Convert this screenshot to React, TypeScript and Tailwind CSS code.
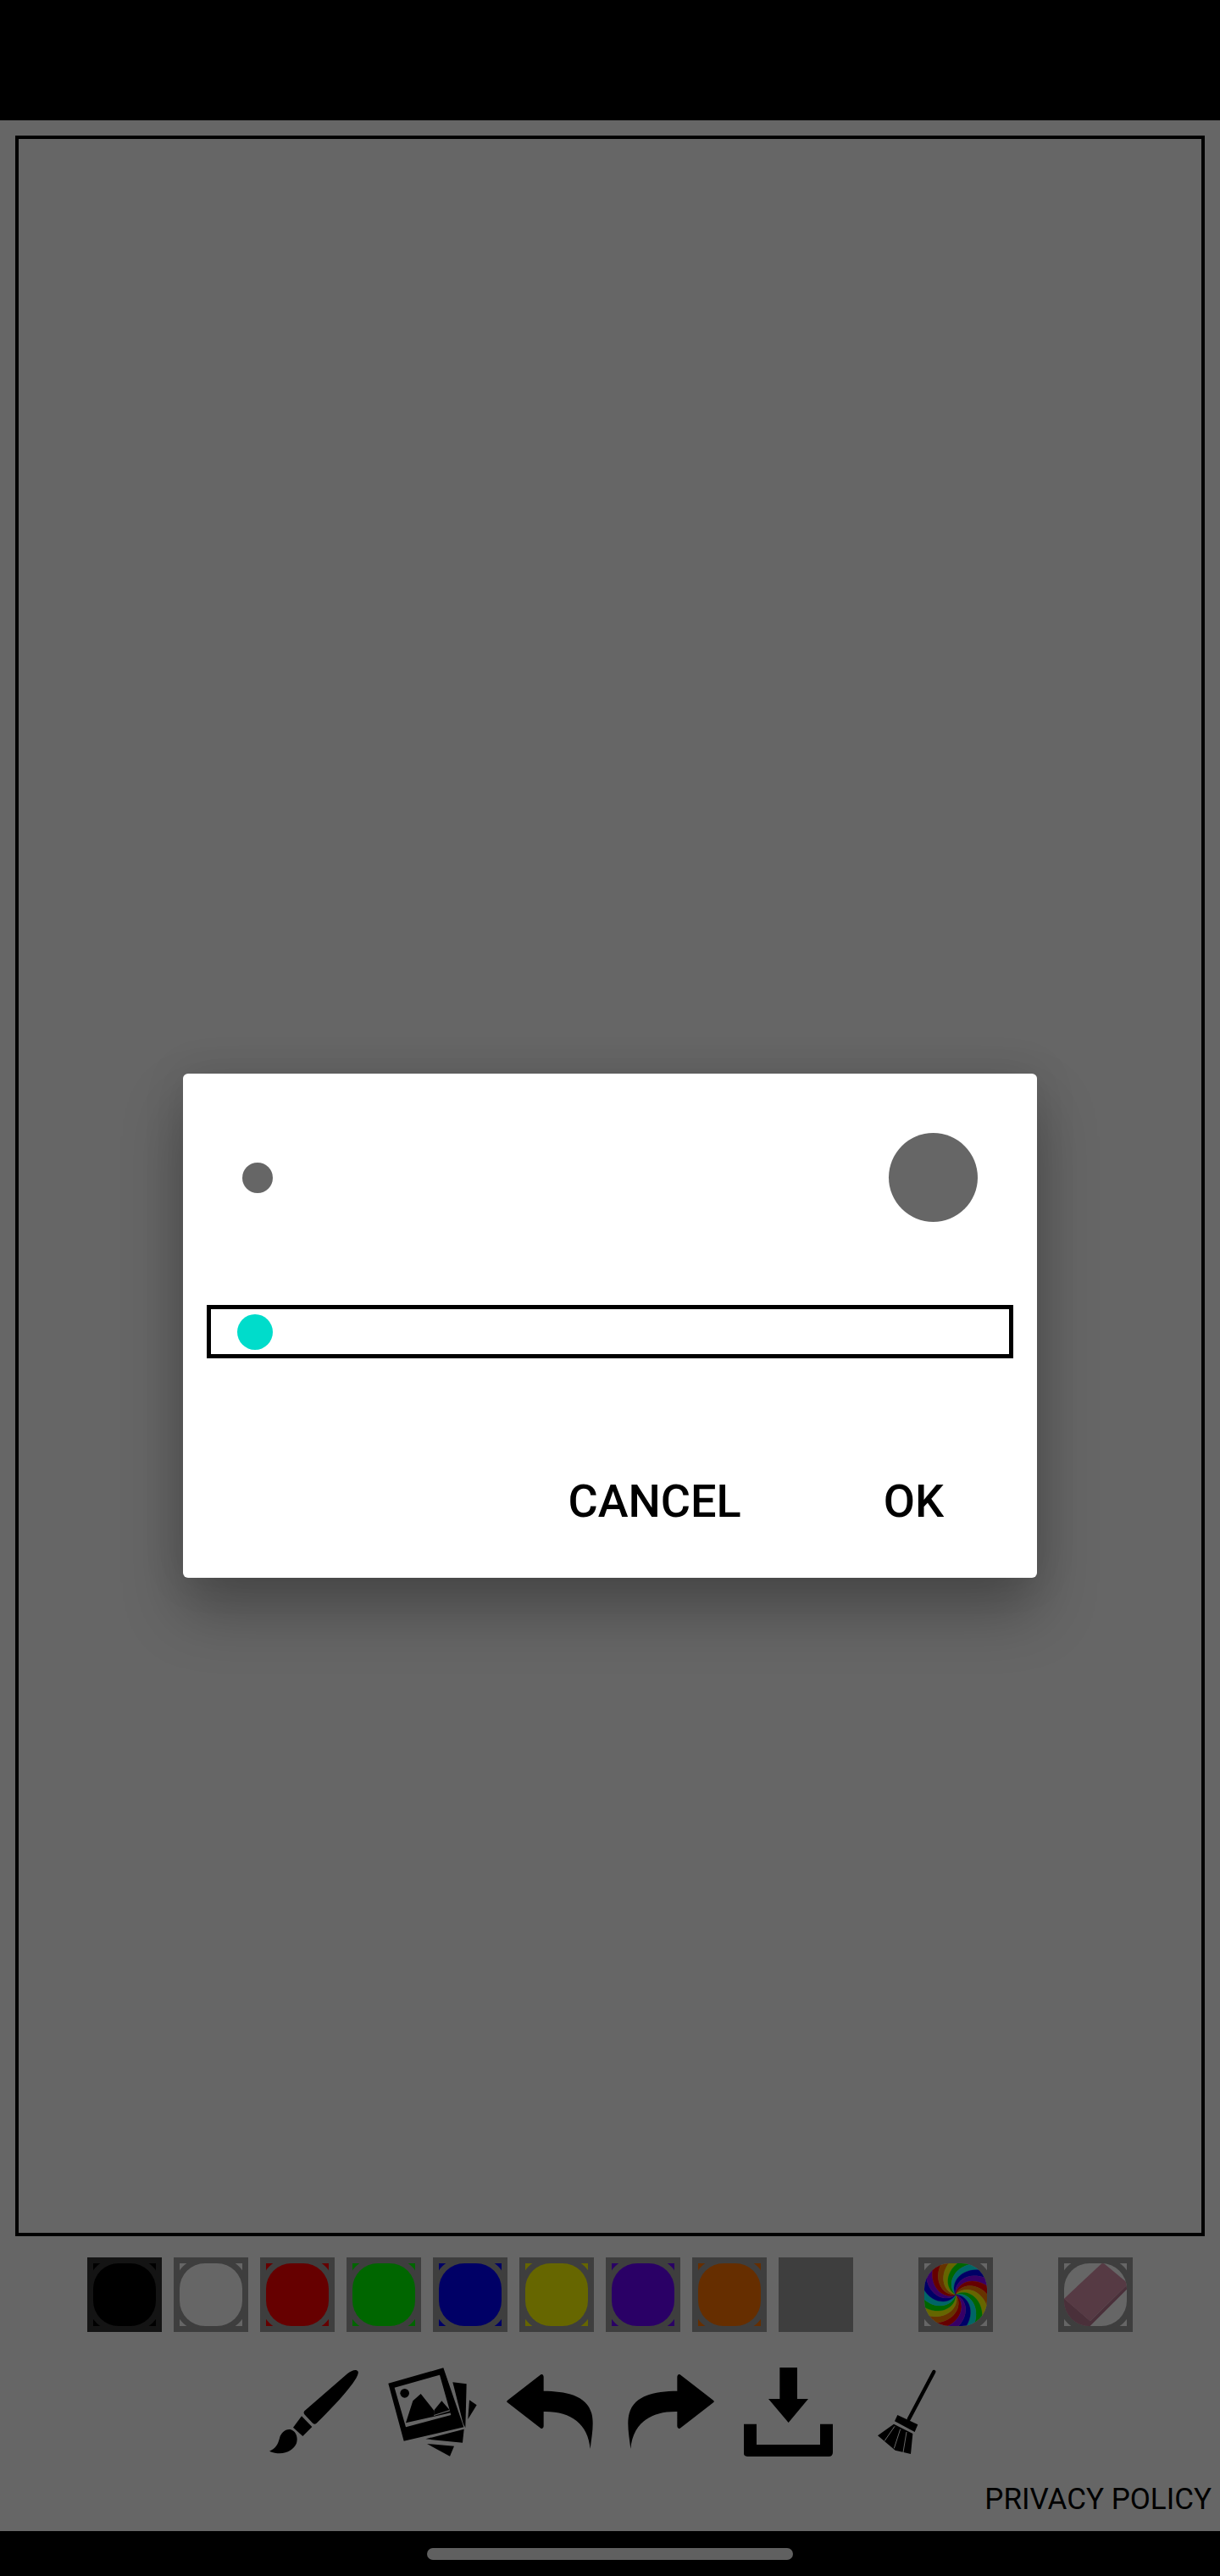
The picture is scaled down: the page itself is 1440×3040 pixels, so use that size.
import type { ReactNode } from 'react'

// paint colours, before the dialog scrim darkens them
const SWATCHES = ['#000000', '#ffffff', '#ff0000', '#00ff00', '#0000ff', '#ffff00', '#6a00ff', '#ff7300']
const RAINBOW = ['#ff0000', '#ff7f00', '#ffff00', '#00ff00', '#00ffff', '#0000ff', '#8b00ff']

function swirlPath(index: number, total: number) {
  const start = (index / total) * Math.PI * 2 + 0.62
  const end = ((index + 1) / total) * Math.PI * 2 + 0.62
  const pts: string[] = []
  const at = (a: number, t: number) => {
    const angle = a + 1.75 * t
    return `${(37 + 56 * t * Math.cos(angle)).toFixed(2)} ${(37 + 56 * t * Math.sin(angle)).toFixed(2)}`
  }
  for (let s = 0; s <= 20; s++) pts.push(at(start, s / 20))
  for (let s = 20; s >= 0; s--) pts.push(at(end, s / 20))
  return 'M' + pts.join('L') + 'Z'
}

function Swatch({ color, selected = false, children }: { color?: string; selected?: boolean; children?: ReactNode }) {
  return (
    <button className={`w-[88px] h-[88px] p-[7px] shrink-0 ${selected ? 'bg-[#323232]' : 'bg-[#9b9b9b]'}`}>
      <div className="w-[74px] h-[74px] overflow-hidden" style={{ background: color ?? '#ffffff' }}>
        <div
          className={`w-[74px] h-[74px] rounded-[30px] overflow-hidden ${
            selected ? 'shadow-[0_0_0_7px_#323232]' : 'shadow-[0_0_0_7px_#9b9b9b]'
          }`}
          style={{ background: color ?? '#ffffff' }}
        >
          {children}
        </div>
      </div>
    </button>
  )
}

function RainbowFill() {
  const bands = Array.from({ length: 21 }, (_, i) => i)
  return (
    <svg viewBox="0 0 74 74" className="block w-[74px] h-[74px]">
      {bands.map((i) => (
        <path key={i} d={swirlPath(i, 21)} fill={RAINBOW[i % 7]} stroke={RAINBOW[i % 7]} strokeWidth="0.3" />
      ))}
    </svg>
  )
}

function EraserFill() {
  return (
    <svg viewBox="588 63 222 222" className="block w-[74px] h-[74px]">
      <path d="M588 188L680 268L680 300L588 300Z" fill="#b97891" />
      <path d="M680 268L815 135L815 150L675 290L600 290L588 230L588 188Z" fill="#b97891" />
      <path d="M725 60L815 135L680 268L588 188Z" fill="#d791aa" />
    </svg>
  )
}

function BrushIcon() {
  return (
    <svg viewBox="54 72 315 315" className="w-[105px] h-[105px] shrink-0">
      <path d="M178 226L330 94C345 82 362 76 368 86C371 96 358 116 346 132C310 180 262 228 220 270C214 274 210 272 206 268L178 238C175 234 175 230 178 226Z" />
      <path d="M168 244L205 282L172 315L138 284Z" />
      <path d="M130 292C148 298 156 318 150 340C138 368 100 388 54 368C74 360 84 346 90 322C95 302 112 288 130 292Z" />
    </svg>
  )
}

function PhotosIcon() {
  return (
    <svg viewBox="474 72 315 315" className="w-[105px] h-[105px] shrink-0">
      <path
        fillRule="evenodd"
        d="M475 128L670 73L742 283L530 332ZM497 143L537 283L697 240L657 98Z"
      />
      <path d="M537 268L562 190L590 165L618 200L638 226L636 243L693 226L697 232Z" />
      <path d="M638 222L664 190L692 222L636 240Z" />
      <circle cx="533" cy="163" r="16" />
      <path d="M703 124L752 130L748 285L740 270Z" />
      <path d="M762 187L788 205L757 255Z" />
      <path d="M607 325L743 290L738 338Z" />
      <path d="M612 342L708 350L693 386Z" />
    </svg>
  )
}

function UndoIcon() {
  return (
    <svg viewBox="894 72 315 315" className="w-[105px] h-[105px] shrink-0">
      <path d="M1015 97Q1024 94 1025 104L1025 155C1100 156 1178 168 1195 235C1204 270 1196 310 1190 360C1182 270 1120 226 1025 228L1025 280Q1024 291 1015 287L897 196Q892 192 897 188Z" />
    </svg>
  )
}

function RedoIcon() {
  return (
    <svg viewBox="54 72 315 315" className="w-[105px] h-[105px] shrink-0">
      <path d="M248 97Q239 94 238 104L238 155C163 156 85 168 68 235C59 270 67 310 73 360C81 270 143 226 238 228L238 280Q239 291 248 287L366 196Q371 192 366 188Z" />
    </svg>
  )
}

function SaveIcon() {
  return (
    <svg viewBox="474 72 315 315" className="w-[105px] h-[105px] shrink-0">
      <path d="M601 72H663V183H702L632 267L561 183H601Z" />
      <path d="M473 272H519V345H744V272H789V372Q789 387 774 387H488Q473 387 473 372Z" />
    </svg>
  )
}

function BroomIcon() {
  return (
    <svg viewBox="-36 12 315 315" className="w-[105px] h-[105px] shrink-0">
      <path d="M217 27L128 195" stroke="#000" strokeWidth="13" strokeLinecap="round" fill="none" />
      <path d="M88 180L160 214L149 240L78 202Z" />
      <path d="M75 212L142 246L135 318L80 305L18 253Z" />
      <path d="M78 220L42 272M98 230L76 298M120 240L108 312" stroke="#fff" strokeWidth="3" fill="none" />
    </svg>
  )
}

export default function App() {
  return (
    <div className="relative w-[1440px] h-[3040px] bg-white flex flex-col overflow-hidden font-['Roboto',sans-serif]">
      <div className="h-[142px] bg-black shrink-0" />

      <main className="flex-1 flex flex-col">
        <div className="mt-[18px] mx-[18px] h-[2479px] border-4 border-black" />

        <div className="mt-[25px] flex justify-center">
          <div className="flex gap-[14px]">
            {SWATCHES.map((c, i) => (
              <Swatch key={c} color={c} selected={i === 0} />
            ))}
            <div className="w-[88px] h-[88px] bg-[#9b9b9b]" />
          </div>
          <div className="ml-[77px]">
            <Swatch>
              <RainbowFill />
            </Swatch>
          </div>
          <div className="ml-[77px]">
            <Swatch>
              <EraserFill />
            </Swatch>
          </div>
        </div>

        <div className="mt-[42px] flex justify-center gap-[35px]">
          <BrushIcon />
          <PhotosIcon />
          <UndoIcon />
          <RedoIcon />
          <SaveIcon />
          <BroomIcon />
        </div>

        <div className="mt-[30px] pr-[10px] text-right text-[35px] leading-[41px] text-black">PRIVACY POLICY</div>
      </main>

      <div className="h-[53px] bg-black shrink-0 flex justify-center items-start pt-[20px]">
        <div className="w-[432px] h-[14px] rounded-full bg-[#f0f0f0]" />
      </div>

      {/* scrim + brush size dialog */}
      <div className="absolute inset-0 bg-black/60 pt-[142px] pb-[53px] flex items-center justify-center">
        <div className="w-[1008px] h-[595px] rounded-[6px] bg-white shadow-[0_40px_70px_rgba(0,0,0,0.28),0_0_50px_rgba(0,0,0,0.1)]">
          <div className="mt-[70px] px-[70px] h-[105px] flex items-center justify-between">
            <div className="w-[36px] h-[36px] rounded-full bg-[#666666]" />
            <div className="w-[105px] h-[105px] rounded-full bg-[#666666]" />
          </div>
          <div className="mt-[98px] mx-[28px] h-[63px] border-[5px] border-black flex items-center">
            <div className="ml-[31px] w-[42px] h-[42px] rounded-full bg-[#00dccb]" />
          </div>
          <div className="mt-[137px] flex justify-end gap-[168px] pr-[110px] text-[54px] leading-[63px] font-medium text-black">
            <button>CANCEL</button>
            <button>OK</button>
          </div>
        </div>
      </div>
    </div>
  )
}
